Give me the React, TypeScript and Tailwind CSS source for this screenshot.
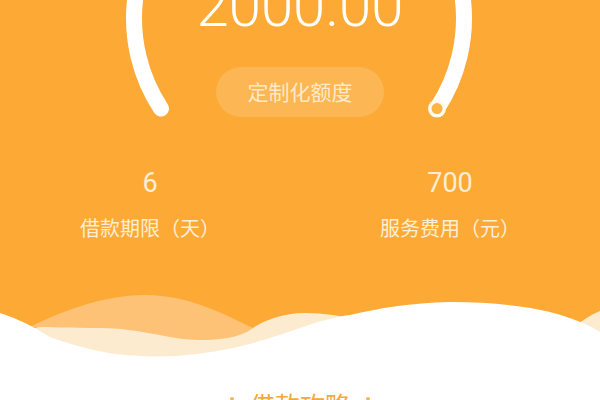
import React from 'react';

const Gauge: React.FC = () => (
  <svg className="absolute left-0 top-0" width="600" height="140" viewBox="0 0 600 140">
    <path
      d="M161 108.6 A165 165 0 1 1 437 108.6"
      fill="none"
      stroke="#ffffff"
      strokeWidth="16"
      strokeLinecap="round"
    />
    <circle cx="437" cy="108.6" r="9" fill="#fffaf0" />
    <circle cx="437" cy="108.6" r="5.5" fill="#fcb445" />
  </svg>
);

const Waves: React.FC = () => (
  <svg className="block" width="600" height="100" viewBox="0 0 600 100">
    {/* cream layer */}
    <path
      d="M25 40 C60 30 200 30 253 38 C262 32 280 23 305 23 C325 23 340 26 360 30 L360 80 L25 80 Z"
      fill="#fdebd0"
    />
    <path d="M568 42 C580 32 590 25 600 21 L600 60 L568 60 Z" fill="#fdebd0" />
    {/* light orange layer */}
    <path
      d="M30 37 C70 17 110 5 145 5 C190 5 225 25 253 38 C240 48 220 50 200 50 C170 50 140 38 100 38 C70 38 50 37 30 37 Z"
      fill="#fdc275"
    />
    {/* white */}
    <path
      d="M0 23 C12 27 24 32 33 37 C42 42 46 45 50 47 C80 58 110 65 140 66 C170 68 205 64 233 58 C260 52 282 44 300 38 C320 31 335 27 350 25 C380 18 410 13 450 12 C490 12 525 16 550 22 C562 25 570 28 578 31 C588 35 594 38 600 42 L600 100 L0 100 Z"
      fill="#ffffff"
    />
  </svg>
);

const Stat: React.FC<{ value: string; label: string }> = ({ value, label }) => (
  <div className="flex flex-col items-center">
    <div className="text-[27px] leading-none font-normal text-[#fdeed6] font-['Roboto',sans-serif]">
      {value}
    </div>
    <div className="mt-[21px] text-[20px] leading-none text-[#fdeed6]">{label}</div>
  </div>
);

export default function App() {
  return (
    <div className="w-[600px] h-[400px] overflow-hidden bg-white font-['Noto_Sans_CJK_SC','Noto_Sans',sans-serif]">
      <div className="relative bg-[#fcaa35]">
        <Gauge />
        <div className="relative flex flex-col items-center">
          <div className="-mt-[23px] text-[58px] leading-none font-light text-white font-['Roboto',sans-serif]">
            2000.00
          </div>
          <div className="mt-[32px] w-[168px] h-[50px] rounded-[25px] bg-white/15 flex items-center justify-center text-[21px] text-[#fdeacb]">
            定制化额度
          </div>
        </div>
        <div className="relative mt-[53px] grid grid-cols-2">
          <Stat value="6" label="借款期限（天）" />
          <Stat value="700" label="服务费用（元）" />
        </div>
        <div className="mt-[52px]">
          <Waves />
        </div>
      </div>
      <div className="pt-[2px] flex items-start justify-center gap-[16px] text-[25px] leading-none text-[#f5a83a]">
        <span className="mt-[5px] w-[4px] h-[4px] rounded-full bg-[#f7b654]" />
        <span>借款攻略</span>
        <span className="mt-[5px] w-[4px] h-[4px] rounded-full bg-[#f7b654]" />
      </div>
    </div>
  );
}
